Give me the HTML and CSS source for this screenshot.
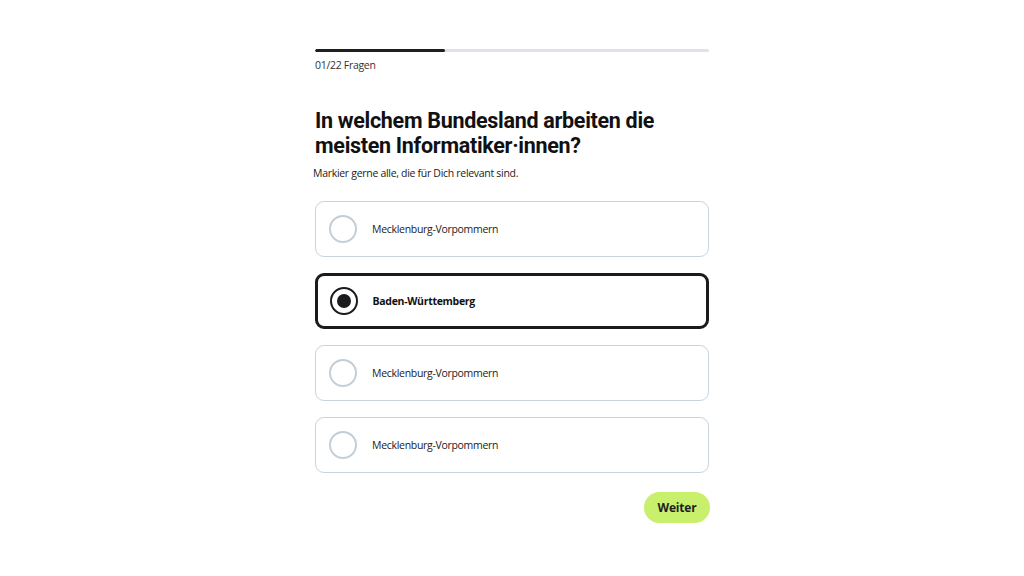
FILE: index.html
```html
<!DOCTYPE html>
<html lang="de">
<head>
    <meta charset="UTF-8">
    <title>Quiz</title>
    <link rel="stylesheet" href="styles.css">
</head>
<body>
<div class="quiz">
    <div class="progress">
        <div class="progress_bar" style="width: 33%"></div>
    </div>
    <div class="count">01/22 Fragen</div>
    <h1 class="question">In welchem Bundesland arbeiten die meisten Informatiker·innen?</h1>
    <p class="hint">Markier gerne alle, die für Dich relevant sind.</p>
    <div class="options">
        <div class="option">
            <span class="radio"></span>
            <span class="label">Mecklenburg-Vorpommern</span>
        </div>
        <div class="option selected">
            <span class="radio"></span>
            <span class="label">Baden-Württemberg</span>
        </div>
        <div class="option">
            <span class="radio"></span>
            <span class="label">Mecklenburg-Vorpommern</span>
        </div>
        <div class="option">
            <span class="radio"></span>
            <span class="label">Mecklenburg-Vorpommern</span>
        </div>
    </div>
    <div class="actions">
        <button class="next">Weiter</button>
    </div>
</div>
</body>
</html>
```

FILE: styles.css
```css
body {
	margin: 0;
	background: #fff;
	font-family: "Open Sans", "Noto Sans", sans-serif;
	color: #1d1d1f;
}
.quiz {
	width: 394px;
	margin: 0 auto;
	padding-top: 49px;
}
.progress {
	height: 3px;
	border-radius: 2px;
	background-color: #dde3e8;
	overflow: hidden;
}
.progress_bar {
	height: 100%;
	background-color: #1f1f22;
	border-radius: 2px;
}
.count {
	margin-top: 6px;
	font-size: 10.5px;
	line-height: 14px;
	letter-spacing: -0.3px;
	color: #333;
}
.question {
	margin: 36px 0 0;
	font-family: "Roboto", sans-serif;
	font-size: 21.5px;
	line-height: 25px;
	font-weight: 700;
	letter-spacing: -0.3px;
	color: #111;
}
.hint {
	margin: 8px 0 0 -2px;
	font-size: 10.5px;
	line-height: 14px;
	letter-spacing: -0.3px;
	color: #222;
}
.options {
	margin-top: 21px;
	display: flex;
	flex-direction: column;
	gap: 16px;
}
.option {
	height: 56px;
	box-sizing: border-box;
	border: 1.5px solid #c8d3dc;
	border-radius: 9px;
	display: flex;
	align-items: center;
	padding-left: 13px;
}
.radio {
	width: 28px;
	height: 28px;
	box-sizing: border-box;
	border: 2.5px solid #c3ced7;
	border-radius: 50%;
	display: flex;
	justify-content: center;
	align-items: center;
}
.label {
	margin-left: 15px;
	font-size: 10.5px;
	letter-spacing: -0.3px;
	color: #222;
}
.option.selected {
	border: 3px solid #1b1b1d;
	padding-left: 11.5px;
}
.option.selected .radio {
	border-color: #1b1b1d;
}
.option.selected .radio::after {
	content: "";
	width: 14px;
	height: 14px;
	border-radius: 50%;
	background-color: #1b1b1d;
}
.option.selected .label {
	font-weight: 700;
	color: #111;
}
.actions {
	margin-top: 19px;
	display: flex;
	justify-content: flex-end;
	margin-right: -1px;
}
.next {
	width: 66px;
	height: 31px;
	border: none;
	border-radius: 16px;
	background-color: #c8f06c;
	font-family: "Open Sans", sans-serif;
	font-size: 12px;
	font-weight: 700;
	letter-spacing: -0.2px;
	color: #1d1d1f;
	cursor: pointer;
}
```
